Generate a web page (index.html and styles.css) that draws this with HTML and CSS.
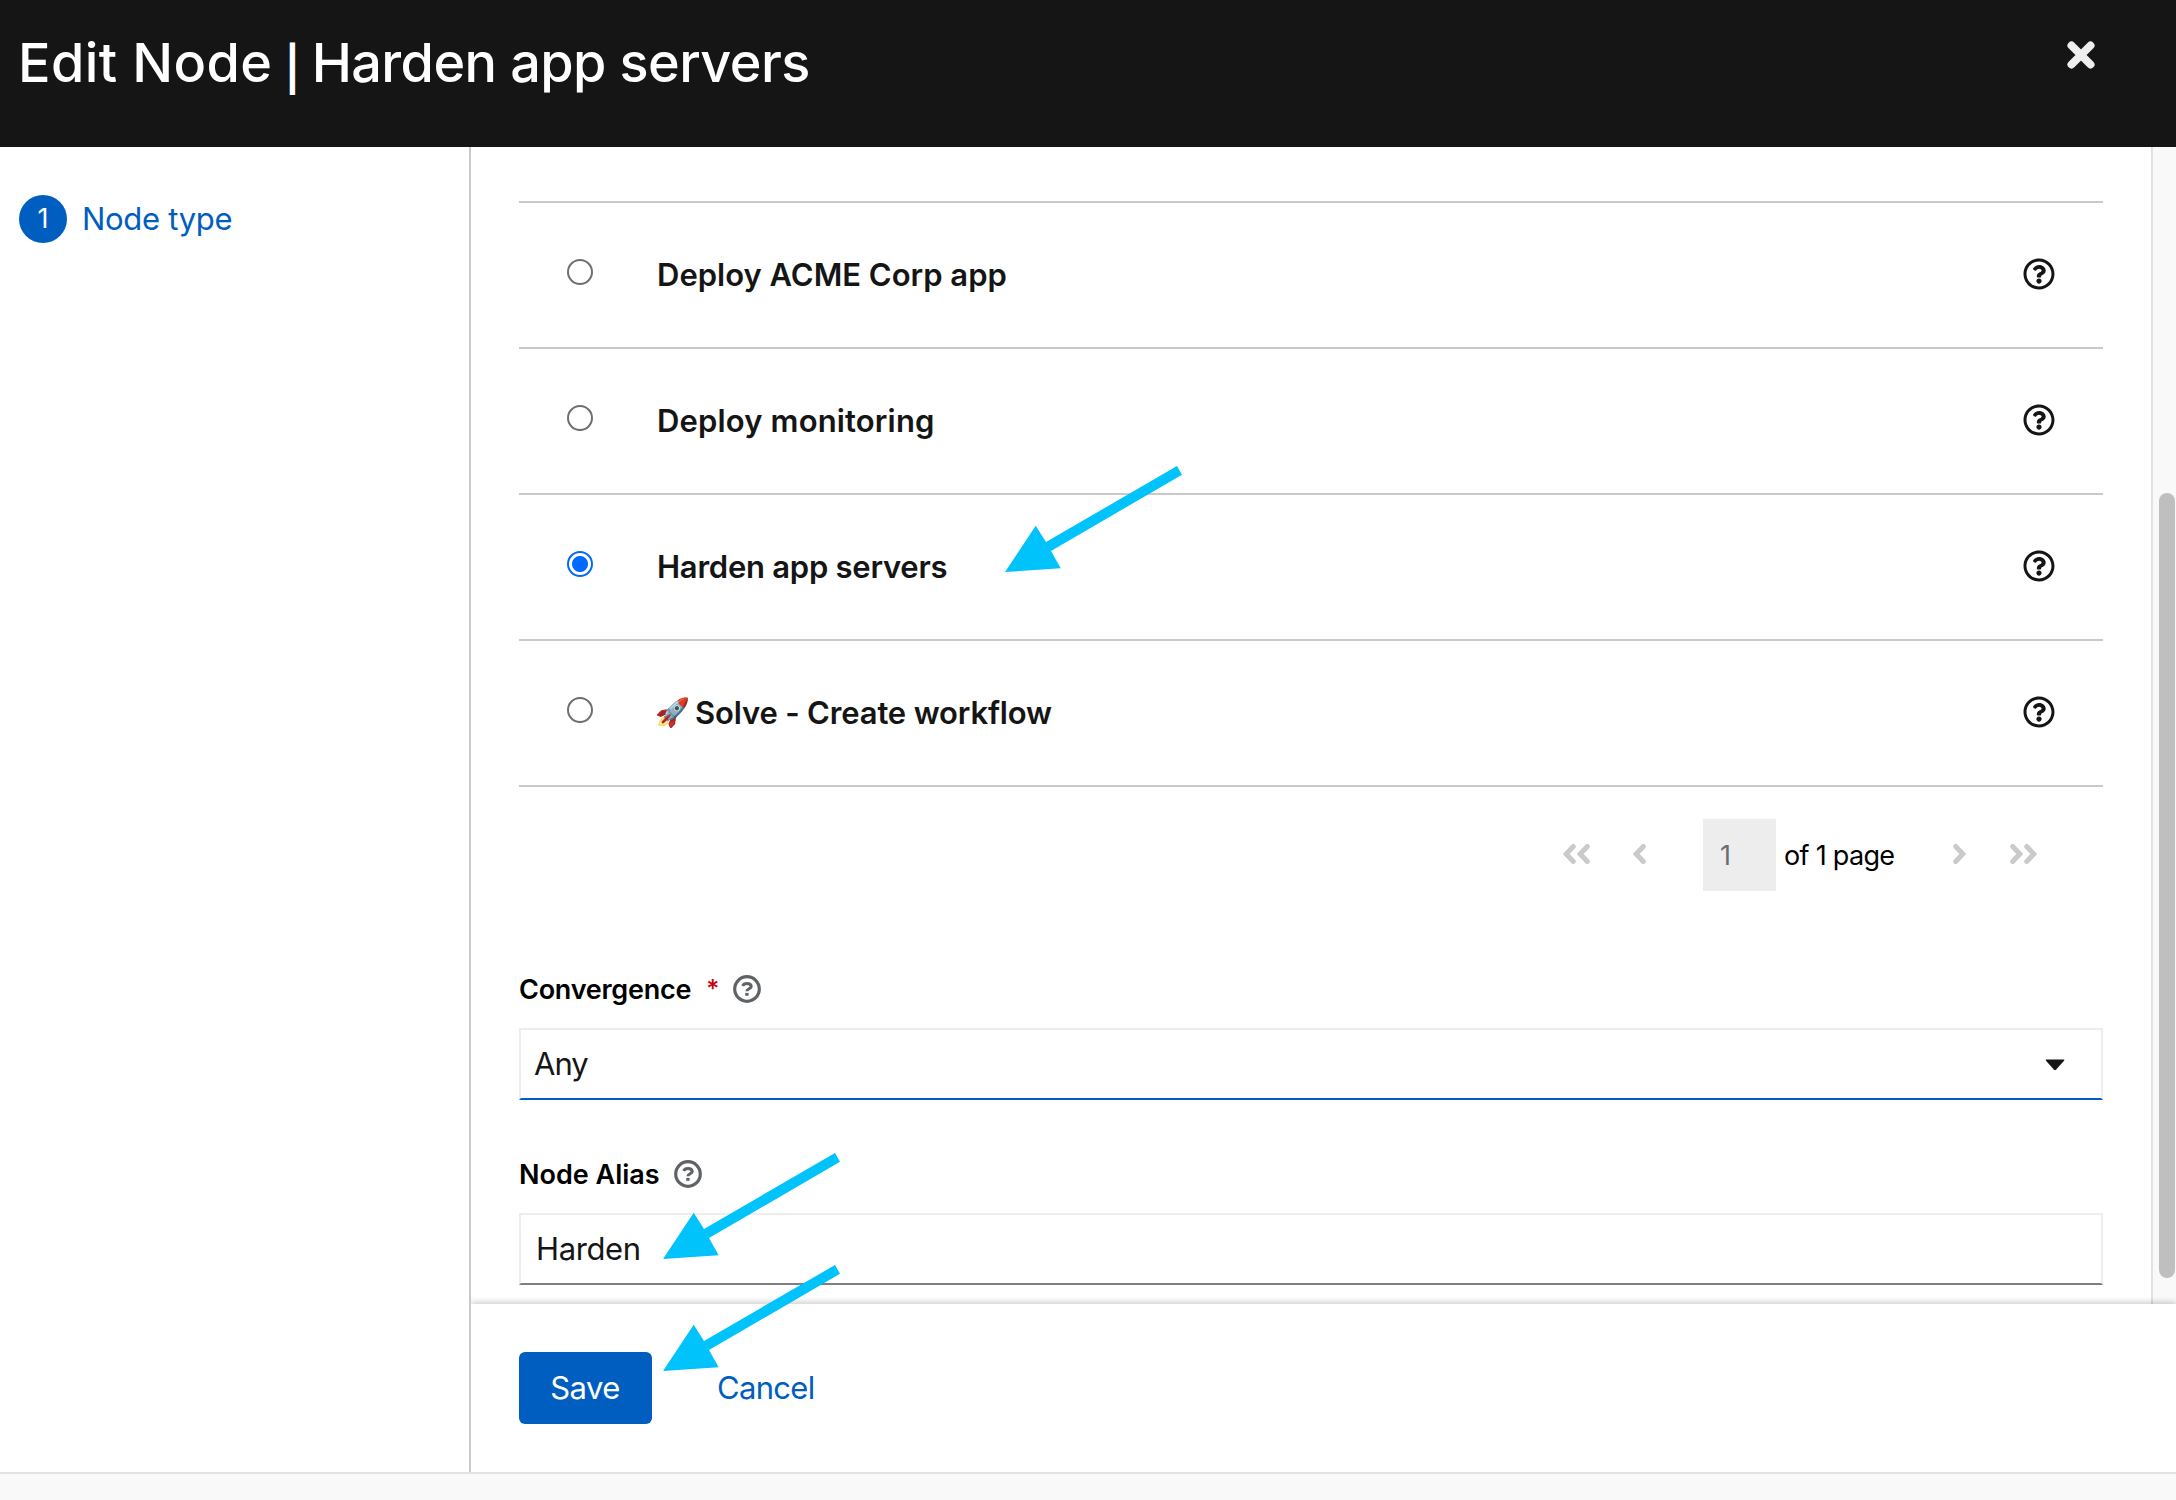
FILE: index.html
```
<!DOCTYPE html>
<html lang="en">
<head>
<meta charset="utf-8">
<title>Edit Node | Harden app servers</title>
<link rel="stylesheet" href="styles.css">
</head>
<body>
<svg class="defs" width="0" height="0" aria-hidden="true">
  <symbol id="help" viewBox="0 0 512 512"><path fill="currentColor" d="M256 8C119 8 8 119 8 256s111 248 248 248 248-111 248-248S393 8 256 8zm0 448c-110.500 0-200-89.400-200-200 0-110.500 89.500-200 200-200 110.500 0 200 89.500 200 200 0 110.500-89.400 200-200 200zm107.200-255.200c0 67.100-72.400 68.100-72.400 92.900V300c0 6.600-5.400 12-12 12h-45.600c-6.600 0-12-5.400-12-12v-8.700c0-35.700 27.100-50 47.600-61.500 17.600-9.800 28.300-16.500 28.300-29.500 0-17.200-22-28.700-39.800-28.700-23.200 0-33.900 11-48.900 30-4.100 5.100-11.500 6.100-16.700 2.100l-27.800-21.100c-5.100-3.900-6.300-11.100-2.600-16.400C184.800 131.500 214.900 112 261.800 112c49 0 101.500 38.300 101.500 88.800zM298 368c0 23.200-18.800 42-42 42s-42-18.800-42-42 18.800-42 42-42 42 18.800 42 42z"/></symbol>
  <symbol id="help-outline" viewBox="0 0 28 28"><circle cx="14" cy="14" r="12.300" fill="none" stroke="currentColor" stroke-width="3.200"/><path d="M9.600 10.900C10.400 9.100 12 8.400 13.900 8.400c2.700 0 4.300 1.100 4.300 3 0 2.500-4.300 2.300-4.300 4.900" fill="none" stroke="currentColor" stroke-width="3"/><path d="M12.200 17.900h3.400v2.900h-3.400z" fill="currentColor"/></symbol>
  <symbol id="angle" viewBox="0 0 14 22"><path d="M10.300 3.500 3.200 11l7.100 7.500" fill="none" stroke="currentColor" stroke-width="5" stroke-linecap="round" stroke-linejoin="miter"/></symbol>
  <symbol id="arrow" viewBox="0 0 177 106"><path fill="#00c3fb" d="M172 0l5 8.700L46 85l9.700 17.300L0 106l30.700-46.300L41 76z"/></symbol>
</svg>
<div class="wizard">
  <header class="head">
    <h1 class="title"><span class="action">Edit Node</span> <span class="bar">|</span> Harden app servers</h1>
    <button class="close" aria-label="Close"><svg width="28" height="28" viewBox="0 0 28 28"><path d="M4.500 4.500l19 19M23.500 4.500l-19 19" stroke="#eee" stroke-width="8" stroke-linecap="round"/></svg></button>
  </header>
  <div class="body">
    <nav class="steps"><a class="step"><span class="num">1</span><span class="step-name">Node type</span></a></nav>
    <main class="main">
      <div class="scroll">
        <div class="content">
          <ul class="list">
            <li class="row"><span class="radio"></span><span class="name t-acme">Deploy ACME Corp app</span><svg class="q"><use href="#help"/></svg></li>
            <li class="row"><span class="radio"></span><span class="name t-mon">Deploy monitoring</span><svg class="q"><use href="#help"/></svg></li>
            <li class="row"><span class="radio on"></span><span class="name t-hard">Harden app servers</span><svg class="q"><use href="#help"/></svg></li>
            <li class="row"><span class="radio"></span><span class="name t-solve"><span class="emoji">🚀</span>Solve - Create workflow</span><svg class="q"><use href="#help"/></svg></li>
          </ul>
          <div class="pager">
            <span class="nav first"><svg class="ang"><use href="#angle"/></svg><svg class="ang"><use href="#angle"/></svg></span>
            <span class="nav prev"><svg class="ang"><use href="#angle"/></svg></span>
            <span class="page">1</span>
            <span class="of">of 1 page</span>
            <span class="nav next"><svg class="ang"><use href="#angle"/></svg></span>
            <span class="nav last"><svg class="ang"><use href="#angle"/></svg><svg class="ang"><use href="#angle"/></svg></span>
          </div>
          <div class="label"><span class="l-conv">Convergence</span><span class="star">*</span><svg class="hint"><use href="#help-outline"/></svg></div>
          <div class="field select"><span class="t-any">Any</span><svg class="caret" width="20" height="12" viewBox="0 0 20 12"><path d="M1.500.5h17q1.500 0 .5 1.300L11 10.700q-1 .9-2 0L1 1.800Q0 .5 1.500.5z" fill="#151515"/></svg></div>
          <div class="label second"><span>Node Alias</span><svg class="hint"><use href="#help-outline"/></svg></div>
          <div class="field input"><span class="t-harden">Harden</span></div>
        </div>
        <div class="track"><div class="thumb"></div></div>
      </div>
      <footer class="foot"><button class="save">Save</button><button class="cancel">Cancel</button></footer>
    </main>
  </div>
  <div class="bottom"></div>
  <svg class="arrow a1"><use href="#arrow"/></svg>
  <svg class="arrow a2"><use href="#arrow"/></svg>
  <svg class="arrow a3"><use href="#arrow"/></svg>
</div>
</body>
</html>
```
FILE: styles.css
```
* { box-sizing: border-box; }
body { margin: 0; font: 31px/1 Inter, sans-serif; color: #151515; background: #fff; }
button { border: 0; padding: 0; background: none; font: inherit; }
svg { display: block; flex: none; }
.defs { position: absolute; }
.wizard { position: relative; width: 2176px; height: 1500px; display: flex; flex-direction: column; overflow: hidden; }

.head { height: 147px; flex: none; background: #151515; color: #fff; display: flex; justify-content: space-between; align-items: flex-start; padding: 33px 81px 0 18px; }
.title { margin: 0; font-size: 54px; line-height: 60px; font-weight: 500; letter-spacing: -.6px; white-space: nowrap; }
.action { letter-spacing: .4px; }
.bar { font-size: 44px; line-height: 0; font-weight: 600; vertical-align: -3px; margin: 0 -1.800px; }
.close { margin-top: 8px; }

.body { flex: none; height: 1325px; display: flex; }
.steps { width: 471px; flex: none; border-right: 2px solid #c9c9c9; padding: 48px 0 0 19px; }
.step { display: flex; align-items: center; gap: 15px; color: #005ec1; }
.num { width: 48px; height: 48px; border-radius: 50%; background: #005ec1; color: #fff; font-size: 27px; line-height: 48px; text-align: center; }
.step-name { letter-spacing: -.3px; padding-bottom: 2px; }

.main { flex: 1; display: flex; flex-direction: column; min-width: 0; }
.scroll { height: 1157px; display: flex; overflow: hidden; }
.content { flex: 1; padding: 54px 48px 0; }
.list { list-style: none; margin: 0; padding: 0; border-top: 2px solid #c9c9c9; }
.row { height: 146px; border-bottom: 2px solid #c9c9c9; display: flex; align-items: center; padding: 0 48px; }
.radio { width: 26px; height: 26px; margin-bottom: 6px; border: 2px solid #6f6f6f; border-radius: 50%; }
.radio.on { border-color: #0069ff; background: radial-gradient(circle, #0069ff 7.500px, #fff 8.500px); }
.name { flex: 1; margin-left: 64px; padding-bottom: 2px; font-weight: 600; display: flex; align-items: center; white-space: nowrap; }
.t-mon { letter-spacing: .15px; }
.t-hard { letter-spacing: -.25px; }
.t-solve { letter-spacing: -.16px; }
.emoji { width: 40px; margin-left: -2px; font-size: 28px; font-weight: 400; }
.q { width: 32px; height: 32px; margin-bottom: 3px; }

.pager { display: flex; align-items: center; justify-content: flex-end; height: 72px; margin: 32px 66px 0 0; font-size: 27px; color: #000; }
.nav { display: flex; color: #cacaca; margin-bottom: 2px; }
.ang { width: 14px; height: 22px; }
.next, .last { transform: scaleX(-1); }
.first { margin-right: 42px; }
.prev { margin-right: 56px; }
.page { width: 73px; height: 72px; padding-left: 17px; line-height: 73px; background: #ededed; color: #6a6e73; margin-right: 8px; }
.of { width: 111px; letter-spacing: -.7px; white-space: nowrap; margin-right: 57px; }
.next { margin-right: 43px; }

.label { display: flex; align-items: center; height: 28px; margin-top: 84px; font-size: 27px; font-weight: 600; color: #000; }
.l-conv { letter-spacing: -.25px; }
.star { width: 12px; margin-left: 15px; color: #c9000f; font-size: 25px; font-weight: 500; }
.hint { width: 28px; height: 28px; margin-left: 14px; color: #5f6368; }
.star + .hint { margin-left: 15px; }
.field { height: 72px; margin-top: 25px; border: 2px solid #ededed; display: flex; align-items: center; justify-content: space-between; padding: 0 36px 2px 13px; }
.select { border-bottom-color: #005ec1; }
.caret { margin-top: 3px; }
.input { border-bottom-color: #7b8087; padding-left: 15px; }
.t-any { letter-spacing: -1px; }
.t-harden { letter-spacing: -.4px; }
.second { margin-top: 60px; }

.track { width: 25px; border-left: 2px solid #e2e2e2; background: #f9f9f9; padding: 346px 1px 0 6px; }
.thumb { height: 785px; border-radius: 8px; background: #bfbfbf; }

.foot { position: relative; height: 168px; background: #fff; box-shadow: 0 -2px 6px rgba(0,0,0,.2); clip-path: inset(-12px 0 0 0); padding: 48px; display: flex; align-items: flex-start; }
.save { width: 133px; height: 72px; padding: 0 1px 2px 0; border-radius: 6px; background: #005ec1; color: #fff; letter-spacing: -.6px; }
.cancel { height: 72px; padding-bottom: 2px; margin-left: 65px; color: #005ec1; letter-spacing: -.7px; }
.bottom { flex: 1; border-top: 2px solid #e2e2e2; background: #f9f9f9; }

.arrow { position: absolute; width: 177px; height: 106px; }
.a1 { left: 1005px; top: 466px; }
.a2 { left: 663px; top: 1153px; }
.a3 { left: 663px; top: 1265px; }
```
